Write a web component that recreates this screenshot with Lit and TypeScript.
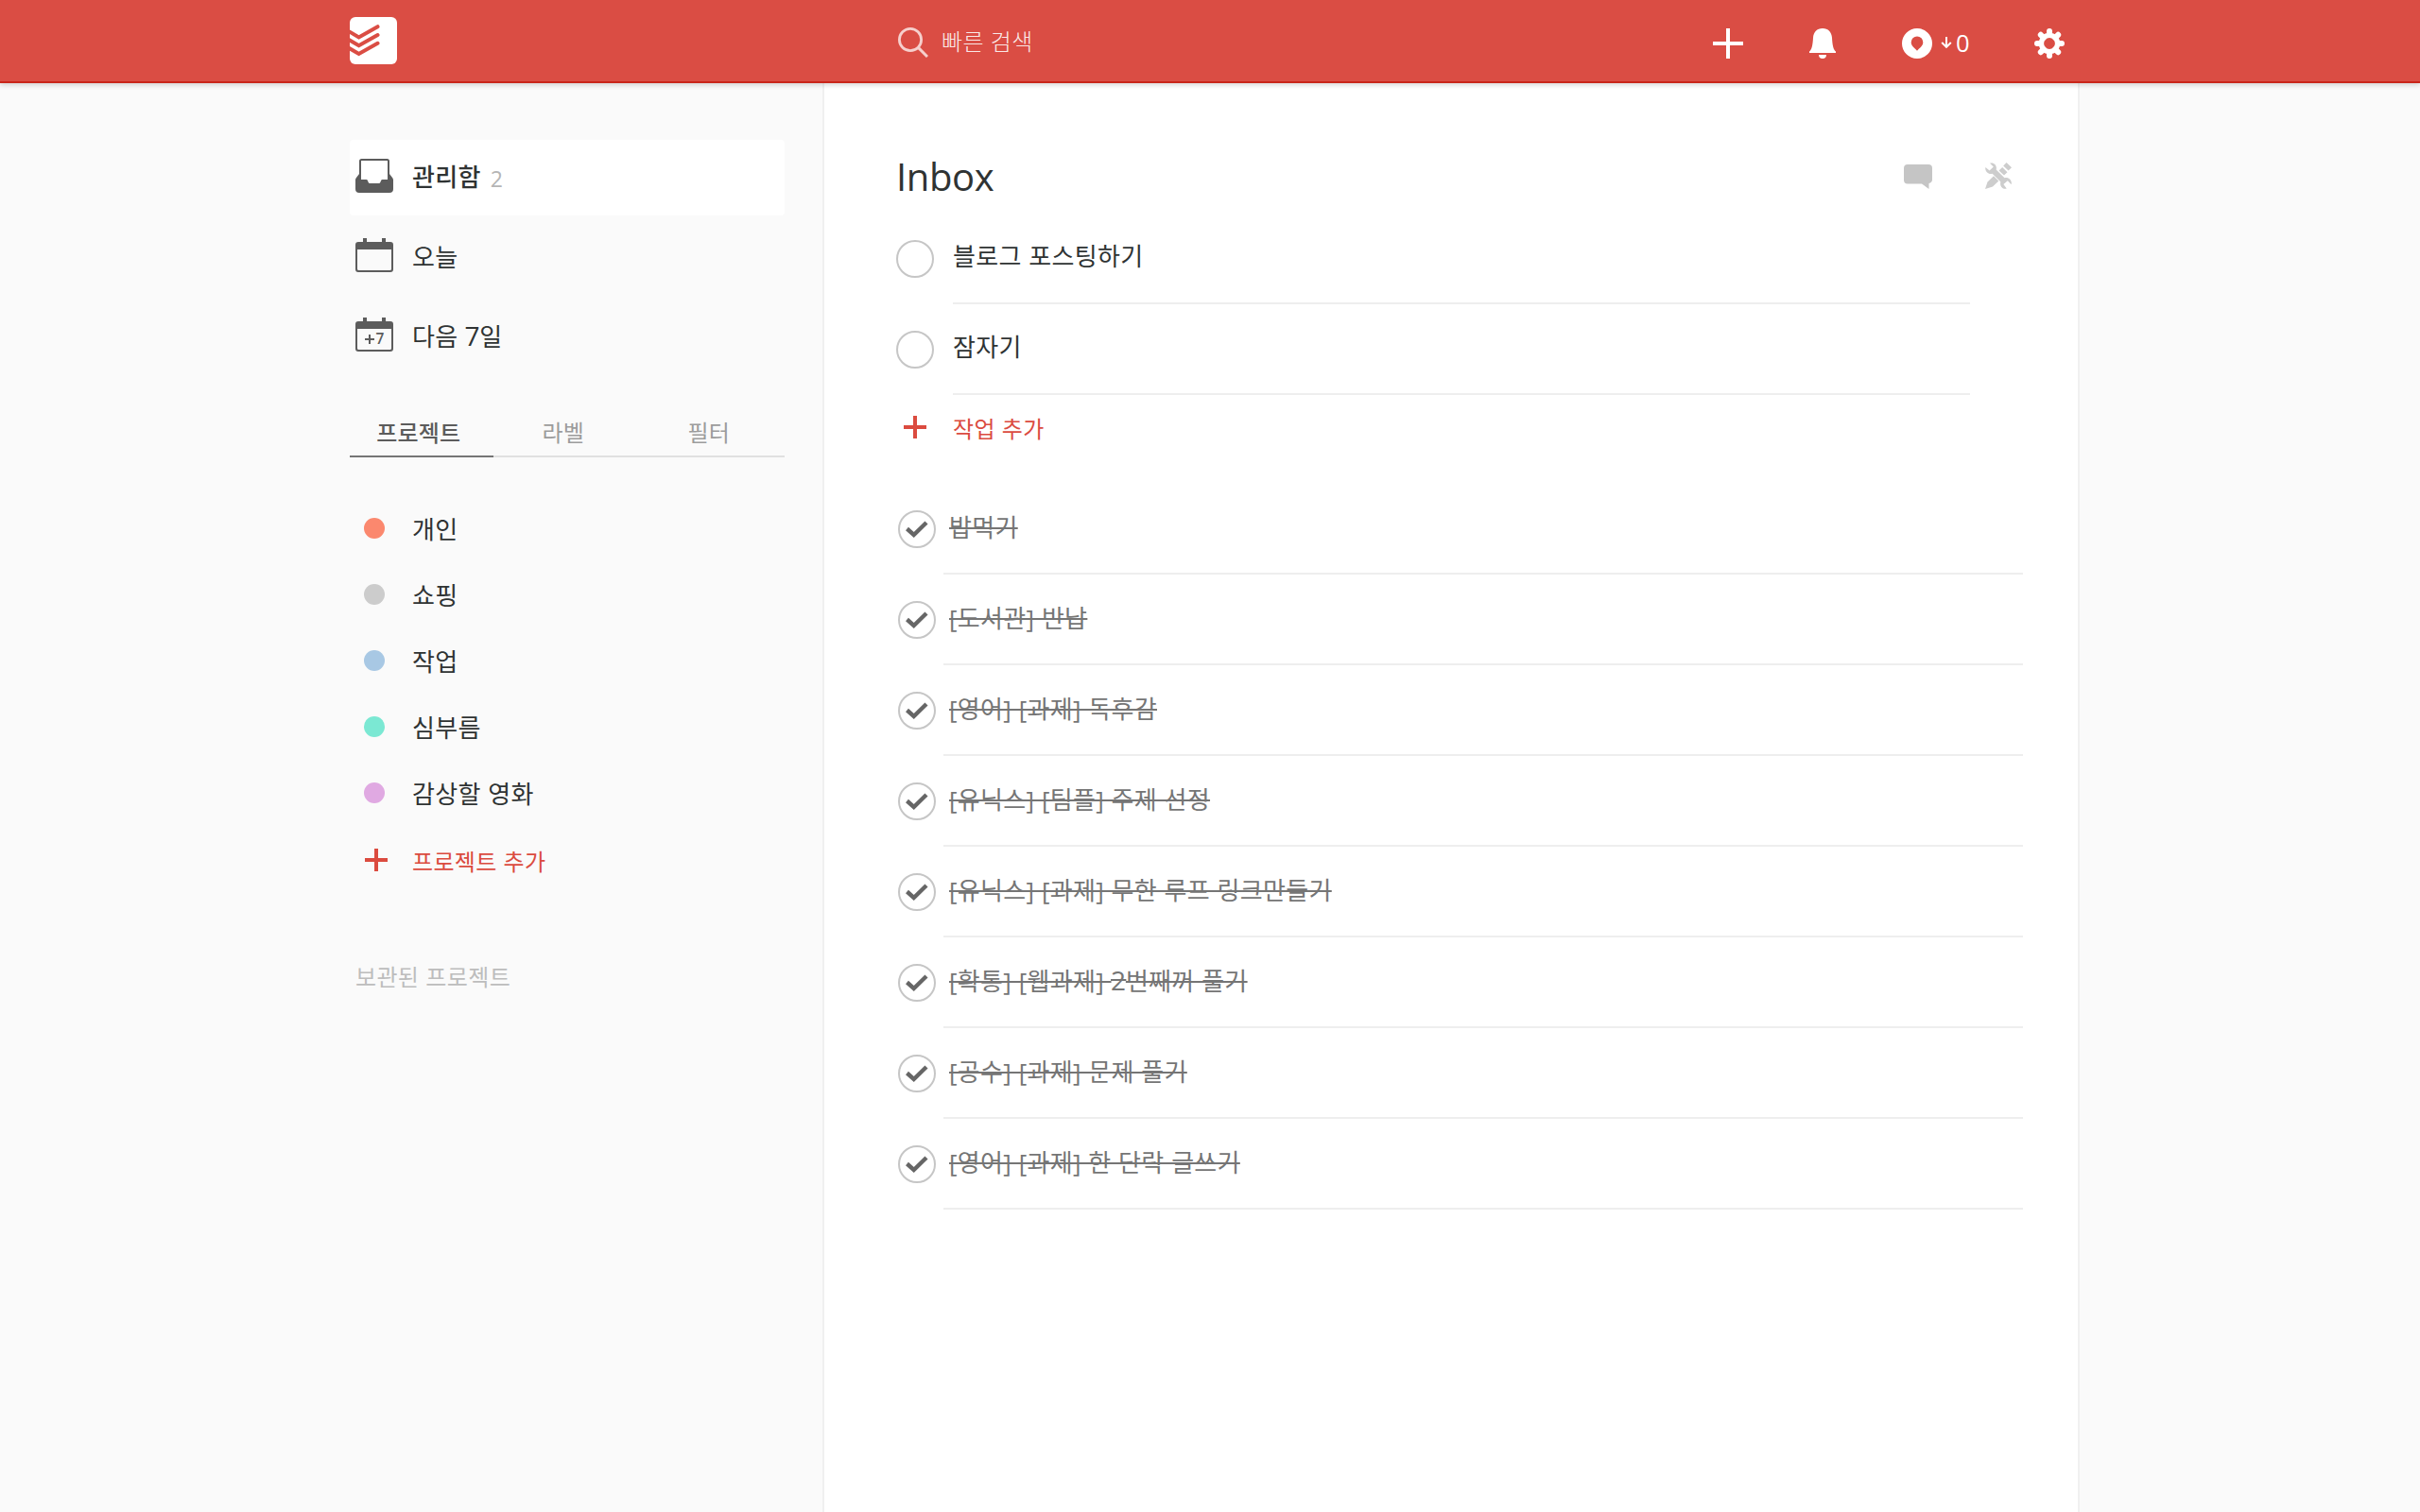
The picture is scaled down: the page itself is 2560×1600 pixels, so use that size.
import { LitElement, html, css, svg } from "lit";
import { customElement } from "lit/decorators.js";

const PROJECTS = [
  { name: "개인", color: "#fb886e" },
  { name: "쇼핑", color: "#cccccc" },
  { name: "작업", color: "#a8c8e4" },
  { name: "심부름", color: "#7be8d3" },
  { name: "감상할 영화", color: "#e0a9e2" },
];

const TASKS = ["블로그 포스팅하기", "잠자기"];

const COMPLETED = [
  "밥먹기",
  "[도서관] 반납",
  "[영어] [과제] 독후감",
  "[유닉스] [팀플] 주제 선정",
  "[유닉스] [과제] 무한 루프 링크만들기",
  "[확통] [웹과제] 2번째꺼 풀기",
  "[공수] [과제] 문제 풀기",
  "[영어] [과제] 한 단락 글쓰기",
];

// Digits are set slightly larger than the Hangul around them.
const withDigits = (text: string) =>
  text.split(/(\d+)/).map((part) => (/^\d+$/.test(part) ? html`<span class="digit">${part}</span>` : part));

const calendar = (label = "") => html`<svg width="40" height="36" viewBox="0 0 40 36">
  <path d="M8 0h4v4h16V0h4v4h5a3 3 0 0 1 3 3v26a3 3 0 0 1-3 3H3a3 3 0 0 1-3-3V7a3 3 0 0 1 3-3h5zM2 12v20.500a1.500 1.500 0 0 0 1.500 1.500h33a1.500 1.500 0 0 0 1.500-1.500V12z" fill="#5c5c5c" fill-rule="evenodd"/>
  ${label ? svg`<path d="M10 23h10M15 18v10" stroke="#5c5c5c" stroke-width="2"/><text class="cal-num" x="21.500" y="28">${label}</text>` : ""}
</svg>`;

const inboxIcon = html`<svg width="40" height="36" viewBox="0 0 40 36">
  <path d="M5 22V2.500A1.500 1.500 0 0 1 6.500 1h27A1.500 1.500 0 0 1 35 2.500V22" fill="none" stroke="#5c5c5c" stroke-width="2"/>
  <path d="M4 16v6h7.500q1 0 1.400 1l.8 2q.4 1 1.400 1h9.800q1 0 1.400-1l.8-2q.4-1 1.400-1H36v-6l3.400 4.600q.6.9.6 2V32a4 4 0 0 1-4 4H4a4 4 0 0 1-4-4v-9.400q0-1.100.6-2z" fill="#5c5c5c"/>
</svg>`;

const plusIcon = html`<svg width="24" height="24" viewBox="0 0 24 24"><path d="M0 12h24M12 0v24" stroke="#db4b3f" stroke-width="4"/></svg>`;

@customElement("app-root")
export class AppRoot extends LitElement {
  static styles = css`
    :host {
      display: flex;
      flex-direction: column;
      height: 1600px;
      overflow: hidden;
      background: #fafafa;
      color: #2f3333;
      font-family: "Open Sans", "Noto Sans CJK KR", sans-serif;
      font-size: 26px;
      line-height: 40px;
      letter-spacing: 0.31px;
      word-spacing: 0.5px;
    }
    svg { display: block; flex: none; }
    .digit { font-size: 28px; line-height: 1; margin: 0 -0.5px; }
    header {
      position: relative;
      flex: none;
      box-sizing: border-box;
      height: 88px;
      padding: 0 376px 0 370px;
      display: flex;
      align-items: center;
      background: #da4d44;
      border-bottom: 2px solid #c9261a;
      box-shadow: 0 2px 5px rgba(0, 0, 0, 0.17);
    }
    .search { display: flex; align-items: center; gap: 14px; margin-left: 530px; padding-top: 3px; }
    .placeholder { margin-bottom: 2px; font-size: 24px; font-weight: 300; color: rgba(255, 255, 255, 0.9); letter-spacing: 0.3px; }
    .actions { display: flex; align-items: center; margin-left: auto; padding-top: 6px; color: #fff; }
    .bell { margin-left: 70px; }
    .karma { display: flex; align-items: center; width: 72px; margin-left: 70px; margin-right: 68px; }
    .arrow { margin: 0 4px 2px 9px; }
    .score { font-size: 25.500px; font-weight: 500; line-height: 32px; letter-spacing: 0; margin-bottom: 2px; }
    .body { flex: 1; display: flex; }
    nav { width: 460px; margin: 60px 40px 0 370px; }
    .views { display: flex; flex-direction: column; gap: 4px; }
    .view { height: 80px; box-sizing: border-box; padding: 0 6px; display: flex; align-items: center; border-radius: 4px; }
    .view svg { margin-right: 20px; margin-bottom: 4px; }
    .current { background: #fff; }
    .current .name { font-weight: 500; margin-bottom: 2px; }
    .cal-num { font-size: 15.500px; fill: #5c5c5c; font-weight: 600; letter-spacing: 0; }
    .count { font-size: 23px; color: #b5b5b5; margin: 1px 0 0 10px; }
    .tabs { display: grid; grid-template-columns: 152px 154px 154px; margin: 38px 0 40px; font-size: 24px; color: #9c9c9c; letter-spacing: 0.2px; }
    .tab { height: 48px; line-height: 48px; padding-right: 6.500px; text-align: center; border-bottom: 2px solid #e0e0e0; }
    .selected { font-weight: 500; color: #5c5c5c; border-color: #757575; }
    .project { height: 70px; display: flex; align-items: center; padding-left: 15px; gap: 29px; }
    .project-name { padding-top: 1px; }
    .dot { width: 22px; height: 22px; border-radius: 50%; }
    .add { display: flex; align-items: center; color: #db4b3f; font-size: 24px; letter-spacing: 0.3px; }
    .add svg { margin-bottom: 5px; }
    .add-project { height: 76px; padding-left: 16px; gap: 26px; }
    .archived { margin: 64px 0 0 6px; font-size: 24px; color: #bdbdbd; letter-spacing: 0.35px; }
    main { width: 1326px; border: solid #f0f0f0; border-width: 0 2px; background: #fff; }
    .title-row { display: flex; align-items: center; height: 62px; margin: 68px 70px 8px 76px; }
    h1 { margin: 0 auto 0 0; font-size: 40px; font-weight: 400; line-height: 60px; letter-spacing: -0.4px; }
    .comment { margin-right: 56px; }
    .tools { margin-bottom: 2px; }
    .task { height: 96px; display: flex; margin: 0 114px 0 76px; gap: 20px; }
    .ring { flex: none; box-sizing: border-box; width: 40px; height: 40px; margin-top: 28px; border: 2px solid #c6c6c6; border-radius: 50%; }
    .label { flex: 1; box-sizing: border-box; padding-top: 25px; border-bottom: 2px solid #eeeeee; }
    .add-task { height: 40px; margin: 16px 0 38px 84px; gap: 28px; }
    .done { margin: 0 58px 0 78px; gap: 8px; }
    .done .label { padding: 25.500px 0 0 6px; color: #757575; }
    .done .text { text-decoration: line-through; text-decoration-thickness: 2px; }
  `;

  render() {
    return html`
      <header>
        <svg width="50" height="50" viewBox="0 0 50 50">
          <rect width="50" height="50" rx="6" fill="#fff"/>
          <path d="M-1 15.200L9.600 21.400 29.500 10.200M-1 24L9.600 30.200 29.500 19M-1 32.800L9.600 39 29.500 27.800" fill="none" stroke="#da4d44" stroke-width="4" stroke-linecap="round"/>
        </svg>
        <div class="search">
          <svg width="32" height="32" viewBox="0 0 32 32"><circle cx="13" cy="13" r="11.600" fill="none" stroke="#f6cfcc" stroke-width="2.800"/><path d="M21.400 21.400L31 31" stroke="#f6cfcc" stroke-width="3"/></svg>
          <span class="placeholder">빠른 검색</span>
        </div>
        <div class="actions">
          <svg width="32" height="32" viewBox="0 0 32 32"><path d="M0 16h32M16 0v32" stroke="#fff" stroke-width="4"/></svg>
          <svg class="bell" width="28" height="32" viewBox="0 0 28 32" fill="#fff"><path d="M14 0C20 0 23.600 4 24 10c.4 8 1.500 12.500 4 14.500V26H0v-1.500C2.500 22.500 3.600 18 4 10 4.400 4 8 0 14 0zM10 28h8a4 4 0 0 1-8 0z"/></svg>
          <div class="karma">
            <svg width="32" height="32" viewBox="0 0 32 32"><path fill="#fff" fill-rule="evenodd" d="M16 0a16 16 0 1 1 0 32 16 16 0 0 1 0-32zM16 8.500a6.300 6.300 0 0 0-6.300 6.300c0 4 3.500 5.500 6.300 8.900 2.800-3.400 6.300-4.900 6.300-8.900A6.300 6.300 0 0 0 16 8.500z"/></svg>
            <svg class="arrow" width="12" height="12" viewBox="0 0 12 12"><path d="M6 0v10.600M1.200 6L6 10.800 10.800 6" fill="none" stroke="#fff" stroke-width="2"/></svg>
            <span class="score">0</span>
          </div>
          <svg width="32" height="32" viewBox="0 0 32 32" fill="none" stroke="#fff"><circle cx="16" cy="16" r="8.600" stroke-width="5.400"/><path d="M16 3v4M16 25v4M3 16h4M25 16h4M6.800 6.800l3 3M22.200 22.200l3 3M25.200 6.800l-3 3M9.800 22.200l-3 3" stroke-width="6" stroke-linecap="round"/></svg>
        </div>
      </header>
      <div class="body">
        <nav>
          <div class="views">
            <div class="view current">${inboxIcon}<span class="name">관리함</span><span class="count">2</span></div>
            <div class="view">${calendar()}<span>오늘</span></div>
            <div class="view">${calendar("7")}<span>${withDigits("다음 7일")}</span></div>
          </div>
          <div class="tabs">
            <div class="tab selected">프로젝트</div>
            <div class="tab">라벨</div>
            <div class="tab">필터</div>
          </div>
          ${PROJECTS.map((p) => html`<div class="project"><span class="dot" style="background:${p.color}"></span><span class="project-name">${p.name}</span></div>`)}
          <div class="add add-project">${plusIcon}<span>프로젝트 추가</span></div>
          <div class="archived">보관된 프로젝트</div>
        </nav>
        <main>
          <div class="title-row">
            <h1>Inbox</h1>
            <svg class="comment" width="30" height="26" viewBox="0 0 30 26" fill="#c5c5c5"><path d="M4 0h22a4 4 0 0 1 4 4v12q0 3-3.500 4V26L19 20.500H4a4 4 0 0 1-4-4V4a4 4 0 0 1 4-4z"/></svg>
            <svg class="tools" width="28" height="28" viewBox="0 0 28 28">
              <g fill="#cdcdcd">
                <path d="M22.600 0L28 5.200 24.600 8.600 19.200 3.400zM18.200 5l5.300 5.200L20 13.400 14.500 8.500zM9 14.200l5.300 5.200L8 25.500 0 28l2.500-7.500z"/>
                <path d="M5 .8C9-.8 13 3 11.600 7.500L20.500 16.200C25 15 28.800 19 27.600 23.200L23.800 19.200 19.400 23l3.300 4.400C19 28.800 15 25 16.400 20.600L7.600 11.800C3.500 13-.5 9.500.4 5L4.600 8.600 8.800 4.600z" stroke="#fff" stroke-width=".6" paint-order="stroke"/>
              </g>
            </svg>
          </div>
          ${TASKS.map((t) => html`<div class="task"><span class="ring"></span><div class="label">${t}</div></div>`)}
          <div class="add add-task">${plusIcon}<span>작업 추가</span></div>
          ${COMPLETED.map((t) => html`<div class="task done">
            <svg width="40" height="96" viewBox="0 0 40 96" fill="none"><circle cx="20" cy="48" r="19" stroke="#c6c6c6" stroke-width="2"/><path d="M9.500 47.500l7.200 6.500L30 41" stroke="#666" stroke-width="4.400"/></svg>
            <div class="label"><span class="text">${withDigits(t)}</span></div>
          </div>`)}
        </main>
      </div>
    `;
  }
}
